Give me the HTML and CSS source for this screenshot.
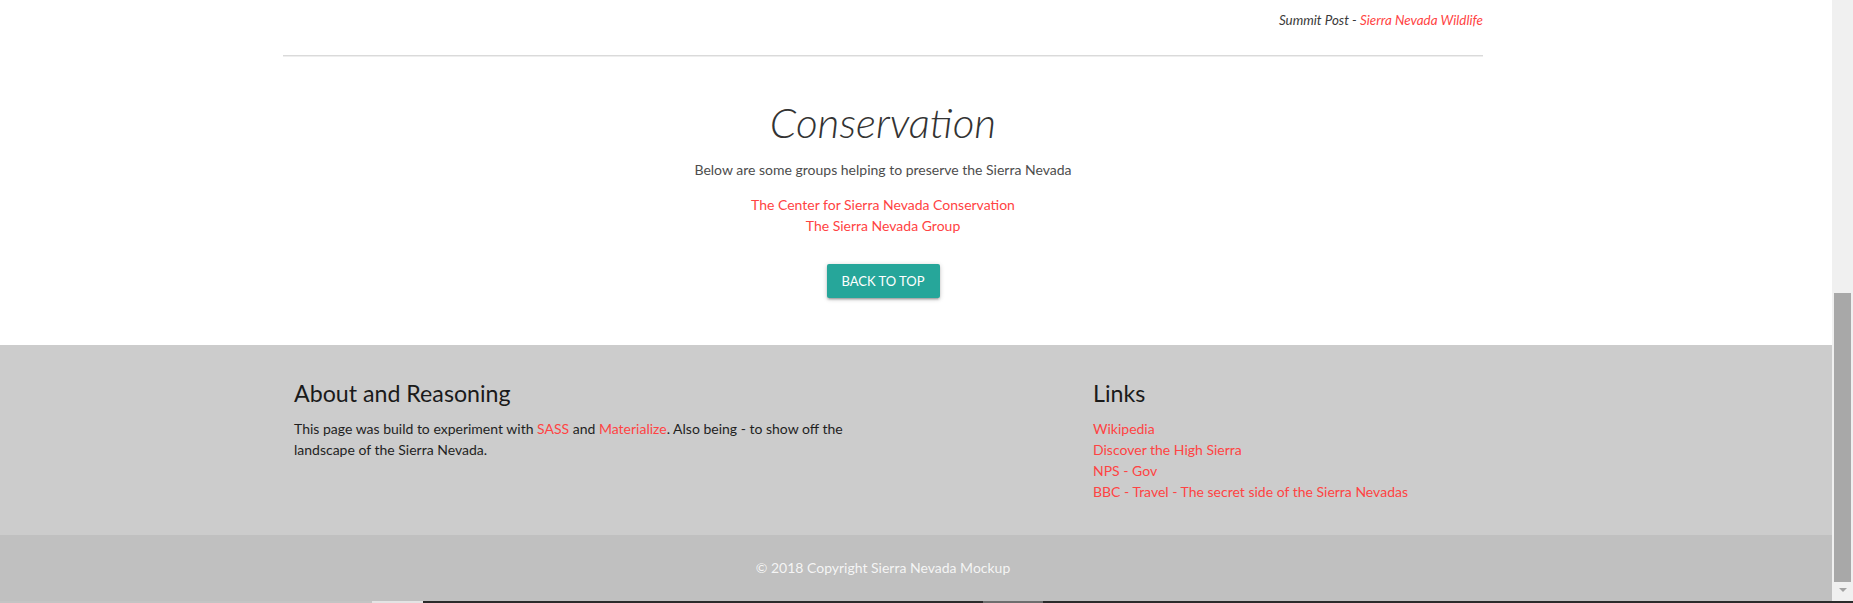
FILE: index.html
```html
<!DOCTYPE html>
<html lang="en">
<head>
<meta charset="utf-8">
<title>Sierra Nevada</title>
<link rel="stylesheet" href="styles.css">
</head>
<body>
<div class="window">
  <div class="page">
    <div class="container top">
      <p class="credit"><em>Summit Post - <a href="#">Sierra Nevada Wildlife</a></em></p>
      <hr class="divider">
    </div>
    <section class="conservation">
      <h3 class="title">Conservation</h3>
      <p class="lead">Below are some groups helping to preserve the Sierra Nevada</p>
      <div class="group-links">
        <a href="#">The Center for Sierra Nevada Conservation</a>
        <a href="#">The Sierra Nevada Group</a>
      </div>
      <a href="#" class="btn">Back to top</a>
    </section>
    <footer class="footer">
      <div class="container footer-row">
        <div class="col about">
          <h5 class="footer-title">About and Reasoning</h5>
          <p class="footer-text">This page was build to experiment with <a href="#">SASS</a> and <a href="#">Materialize</a>. Also being - to show off the landscape of the Sierra Nevada.</p>
        </div>
        <div class="col links">
          <h5 class="footer-title">Links</h5>
          <ul class="link-list">
            <li><a href="#">Wikipedia</a></li>
            <li><a href="#">Discover the High Sierra</a></li>
            <li><a href="#">NPS - Gov</a></li>
            <li><a href="#">BBC - Travel - The secret side of the Sierra Nevadas</a></li>
          </ul>
        </div>
      </div>
      <div class="copyright">© 2018 Copyright Sierra Nevada Mockup</div>
    </footer>
  </div>
  <div class="scrollbar">
    <div class="thumb"></div>
    <div class="arrow"></div>
  </div>
</div>
<div class="taskbar">
  <div class="tb-a"></div>
  <div class="tb-b"></div>
  <div class="tb-c"></div>
  <div class="tb-d"></div>
  <div class="tb-c tb-fill"></div>
</div>
</body>
</html>
```
FILE: styles.css
```css
* { box-sizing: border-box; }
html, body { margin: 0; padding: 0; }
body {
  height: 603px;
  overflow: hidden;
  font-family: "Lato", "Open Sans", sans-serif;
  font-size: 14px;
  color: #333;
  background: #fff;
}
a { color: #ff4343; text-decoration: none; }

.window { display: flex; height: 601px; }
.page { flex: 1; display: flex; flex-direction: column; min-width: 0; }

.container { width: 1200px; margin-left: 283px; }

.credit {
  margin: 0;
  padding-top: 10px;
  line-height: 20px;
  text-align: right;
  font-size: 13.4px;
  color: #3a3a3a;
}
.divider {
  margin: 25px 0 0;
  height: 0;
  border: 0;
  border-top: 1px solid #dadada;
  border-bottom: 1px solid #eeeeee;
}

.conservation {
  flex: 1;
  display: flex;
  flex-direction: column;
  align-items: center;
  width: 1766px;
}
.title {
  margin: 41px 0 0;
  font-size: 42.3px;
  line-height: 47px;
  font-weight: 300;
  font-style: italic;
  color: #333;
}
.lead {
  margin: 14px 0 0;
  line-height: 21px;
  color: #4d4d4d;
}
.group-links {
  margin-top: 14px;
  display: flex;
  flex-direction: column;
  align-items: center;
  line-height: 21px;
}
.btn {
  margin-top: 28px;
  width: 113px;
  height: 34px;
  line-height: 34px;
  text-align: center;
  background: #26a69a;
  color: #fff;
  text-transform: uppercase;
  font-size: 13px;
  border-radius: 2px;
  box-shadow: 0 2px 2px 0 rgba(0,0,0,0.14), 0 3px 1px -2px rgba(0,0,0,0.12), 0 1px 5px 0 rgba(0,0,0,0.2);
}

.footer { background: #cccccc; }
.footer-row {
  display: flex;
  padding: 35px 0 33px;
}
.col { padding: 0 11px; }
.about { width: 600px; }
.links { margin-left: 200px; width: 400px; padding-left: 10px; }
.footer-title {
  margin: 0;
  font-size: 23.2px;
  line-height: 26px;
  font-weight: 400;
  color: #1a1a1a;
}
.footer-text {
  margin: 12px 0 0;
  line-height: 21px;
  color: #1f1f1f;
  width: 578px;
}
.link-list {
  list-style: none;
  margin: 12px 0 0;
  padding: 0;
  line-height: 21px;
}
.copyright {
  background: #c0c0c0;
  height: 66px;
  line-height: 66px;
  text-align: center;
  color: rgba(255,255,255,0.85);
  font-size: 14px;
  padding-right: 66px;
}

.scrollbar {
  width: 21px;
  background: #f0f0f0;
  display: flex;
  flex-direction: column;
  align-items: center;
}
.thumb {
  margin-top: 293px;
  width: 17px;
  height: 289px;
  background: #a8a8a8;
}
.arrow {
  margin-top: 6px;
  width: 0;
  height: 0;
  border-left: 4px solid transparent;
  border-right: 4px solid transparent;
  border-top: 4px solid #a3a3a3;
}

.taskbar { display: flex; height: 2px; background: #2b2b2b; }
.tb-a { width: 372px; background: #c4c4c4; }
.tb-b { width: 51px; background: #e4e4e4; }
.tb-c { width: 560px; background: #2b2b2b; }
.tb-d { width: 60px; background: #6e6e6e; }
.tb-fill { flex: 1; }
```
